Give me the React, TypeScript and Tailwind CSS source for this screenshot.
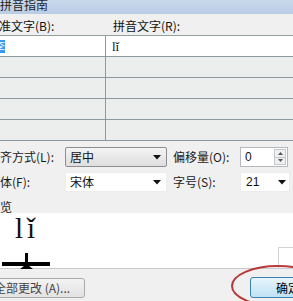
const cjk = { fontFamily: '"Noto Sans CJK SC", "Liberation Sans", sans-serif' };

function Arrow() {
  return (
    <svg width="8" height="5" viewBox="0 0 8 5" className="shrink-0">
      <path d="M0 0 L8 0 L4 4.5 Z" fill="#111" />
    </svg>
  );
}

function Label({ children, w }: { children: React.ReactNode; w: string }) {
  return (
    <div className={`${w} shrink-0 text-[12px] leading-none text-[#1a1a1a]`} style={cjk}>
      {children}
    </div>
  );
}

export default function App() {
  return (
    <div className="relative w-[293px] h-[301px] overflow-hidden bg-[#f0f0f0] text-[#111]" style={cjk}>
      {/* title bar */}
      <div className="h-[14px] bg-gradient-to-b from-[#c9d9ec] to-[#b8cce4] flex items-center">
        <span className="text-[12px] leading-none text-[#1e1e1e] mt-[-5px]">拼音指南</span>
      </div>

      {/* grid header */}
      <div className="h-[22px] flex items-center border-b border-[#93a39b] bg-[#f0f0f0]">
        <div className="w-[106px] shrink-0 ml-[-13px] text-[12px] leading-none pt-[2px]">基准文字(B):</div>
        <div className="pl-[20px] text-[12px] leading-none pt-[2px]">拼音文字(R):</div>
      </div>

      {/* grid rows */}
      <div className="flex flex-col">
        <div className="h-[21px] grid grid-cols-[106px_1fr] bg-white border-b border-[#8e98a2]">
          <div className="border-r border-[#8e98a2] flex items-center">
            <span className="ml-[-7px] bg-[#3399ff] text-white text-[12px] leading-[13px]">李</span>
          </div>
          <div className="flex items-center pl-[6px] text-[13px] leading-none" style={{ fontFamily: '"Liberation Serif", serif' }}>lǐ</div>
        </div>
        {[0, 1, 2, 3].map((i) => (
          <div key={i} className="h-[21px] grid grid-cols-[106px_1fr] bg-[#eceeee] border-b border-[#8e98a2]">
            <div className="border-r border-[#8e98a2]" />
            <div />
          </div>
        ))}
      </div>

      {/* controls */}
      <div className="flex flex-col gap-[5px] pt-[6px] ml-[-12px]">
        <div className="h-[20px] flex items-center">
          <Label w="w-[77px]">对齐方式(L):</Label>
          <div className="w-[102px] h-[20px] shrink-0 flex items-center justify-between pl-[4px] pr-[5px] rounded-[2px] border border-[#8c8d8e] bg-gradient-to-b from-[#f4f4f4] to-[#dedede] text-[12px]">
            <span>居中</span>
            <Arrow />
          </div>
          <Label w="w-[73px] pl-[6px]">偏移量(O):</Label>
          <div className="w-[48px] h-[20px] shrink-0 flex items-center justify-between pl-[4px] pr-[1px] border border-[#b5b8bd] bg-white">
            <span className="text-[12px] leading-none" style={{ fontFamily: '"Liberation Sans", sans-serif' }}>0</span>
            <div className="w-[12px] h-[16px] flex flex-col border border-[#c4c7cc] bg-[#eef0f2]">
              <div className="flex-1 flex items-center justify-center border-b border-[#c4c7cc]">
                <svg width="5" height="3" viewBox="0 0 5 3"><path d="M0 3 L5 3 L2.5 0 Z" fill="#555" /></svg>
              </div>
              <div className="flex-1 flex items-center justify-center">
                <svg width="5" height="3" viewBox="0 0 5 3"><path d="M0 0 L5 0 L2.5 3 Z" fill="#555" /></svg>
              </div>
            </div>
          </div>
        </div>
        <div className="h-[20px] flex items-center">
          <Label w="w-[77px]">字体(F):</Label>
          <div className="w-[102px] h-[20px] shrink-0 flex items-center justify-between pl-[4px] pr-[5px] bg-white border border-[#ededed] text-[12px]">
            <span>宋体</span>
            <Arrow />
          </div>
          <Label w="w-[73px] pl-[6px]">字号(S):</Label>
          <div className="w-[50px] h-[20px] shrink-0 flex items-center justify-between pl-[5px] pr-[3px] bg-white border border-[#ececec]">
            <span className="text-[12px] leading-none" style={{ fontFamily: '"Liberation Sans", sans-serif' }}>21</span>
            <Arrow />
          </div>
        </div>
        <div className="h-[16px] flex items-end">
          <Label w="w-[40px]">预览</Label>
        </div>
      </div>

      {/* preview */}
      <div className="relative h-[56px] bg-white border-b border-[#c9c9c9] pl-[15px] pt-[1px]">
        <div className="h-[29px] text-[29px] leading-none tracking-[4px] text-[#111]" style={{ fontFamily: '"Liberation Serif", serif' }}>lǐ</div>
        <svg width="52" height="16" viewBox="0 0 52 16" className="block mt-[10px] ml-[-13px]">
          <rect x="0" y="9" width="48" height="4" fill="#000" />
          <rect x="23" y="0" width="3" height="15" fill="#000" />
          <path d="M18 16 L24.5 11 L31 16 Z" fill="#000" />
        </svg>
        <div className="absolute right-0 bottom-0 w-[15px] h-[21px] border-l border-t border-[#d3d3d3]" />
      </div>

      {/* bottom buttons */}
      <div className="flex items-center justify-between pt-[8px]">
        <div className="ml-[-14px] w-[99px] h-[20px] flex items-center pl-[7px] rounded-[3px] border border-[#a9a9a9] bg-gradient-to-b from-[#f3f3f3] to-[#e2e2e2] text-[12px] text-[#444]">
          全部更改 (A)...
        </div>
        <div className="mr-[-30px] w-[73px] h-[21px] flex items-center pl-[25px] rounded-[3px] border border-[#3c7fb1] bg-gradient-to-b from-[#e8f5fc] to-[#bfe2f5] text-[12px] text-black">
          确定
        </div>
      </div>

      {/* red annotation ellipse */}
      <svg className="absolute left-[228px] top-[262px]" width="90" height="48" viewBox="0 0 90 48">
        <ellipse cx="50" cy="24" rx="46" ry="20" fill="none" stroke="#b8393a" strokeWidth="2" />
      </svg>
    </div>
  );
}
